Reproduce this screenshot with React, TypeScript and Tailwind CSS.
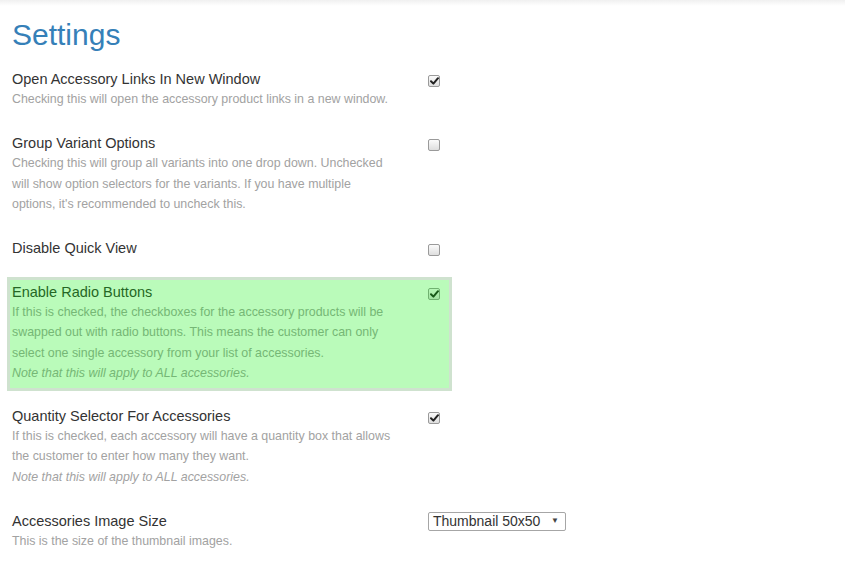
import React from "react";

const font = { fontFamily: '"Liberation Sans", Arial, Helvetica, sans-serif' };

function Check({ checked }: { checked: boolean }) {
  return (
    <div className="mt-[6px] -ml-[1px] w-[12px] h-[12px] rounded-[2px] border border-[#9a9a9a] bg-gradient-to-b from-[#fbfbfb] to-[#dedede] flex items-center justify-center shrink-0">
      {checked && (
        <svg width="9" height="8" viewBox="0 0 9 8">
          <path d="M1 4.2 L3.4 6.6 L8 1.2" stroke="#222" strokeWidth="2" fill="none" strokeLinecap="round" strokeLinejoin="round" />
        </svg>
      )}
    </div>
  );
}

type Row = {
  title: string;
  lines: string[];
  note?: boolean;
  control: "on" | "off" | "select";
  highlight?: boolean;
};

const rows: Row[] = [
  {
    title: "Open Accessory Links In New Window",
    lines: ["Checking this will open the accessory product links in a new window."],
    control: "on",
  },
  {
    title: "Group Variant Options",
    lines: [
      "Checking this will group all variants into one drop down. Unchecked",
      "will show option selectors for the variants. If you have multiple",
      "options, it's recommended to uncheck this.",
    ],
    control: "off",
  },
  { title: "Disable Quick View", lines: [], control: "off" },
  {
    title: "Enable Radio Buttons",
    lines: [
      "If this is checked, the checkboxes for the accessory products will be",
      "swapped out with radio buttons. This means the customer can only",
      "select one single accessory from your list of accessories.",
    ],
    note: true,
    control: "on",
    highlight: true,
  },
  {
    title: "Quantity Selector For Accessories",
    lines: [
      "If this is checked, each accessory will have a quantity box that allows",
      "the customer to enter how many they want.",
    ],
    note: true,
    control: "on",
  },
  {
    title: "Accessories Image Size",
    lines: ["This is the size of the thumbnail images."],
    control: "select",
  },
];

export default function App() {
  return (
    <div className="w-[845px] h-[571px] bg-white overflow-hidden" style={font}>
      <div className="h-[6px] bg-gradient-to-b from-[#f0f0f0] to-white" />
      <div className="pl-[12px]">
        <h1 className="mt-[12px] text-[30px] leading-[33px] text-[#3580b8] font-normal">Settings</h1>
        <div className="mt-[18px]">
          {rows.map((r) => (
            <div
              key={r.title}
              className={
                r.highlight
                  ? "relative flex mt-[3.5px] mb-[22px]"
                  : "relative flex mb-[23.5px]"
              }
            >
              <div className="w-[417px] shrink-0">
                <div className="text-[14.5px] leading-[20px] text-[#333]">{r.title}</div>
                {r.lines.map((l) => (
                  <div key={l} className="text-[12.4px] leading-[20.5px] text-[#a2a2a2] whitespace-nowrap">
                    {l}
                  </div>
                ))}
                {r.note && (
                  <div className="text-[12.4px] leading-[20.5px] text-[#a2a2a2] italic">
                    Note that this will apply to ALL accessories.
                  </div>
                )}
              </div>
              {r.control === "select" ? (
                <div className="mt-[1px] -ml-[1px] w-[138px] h-[19px] border border-[#a6a6a6] rounded-[2px] flex items-center justify-between pl-[4px] pr-[6px] text-[14px] text-[#333]">
                  <span>Thumbnail 50x50</span>
                  <span className="text-[8px] text-[#444]">▼</span>
                </div>
              ) : (
                <Check checked={r.control === "on"} />
              )}
              {r.highlight && (
                <div className="absolute -left-[5px] -top-[5px] -bottom-[7px] w-[445px] border-[3px] border-[#cfe2cf] bg-[rgba(0,240,0,0.27)]" />
              )}
            </div>
          ))}
        </div>
      </div>
    </div>
  );
}
